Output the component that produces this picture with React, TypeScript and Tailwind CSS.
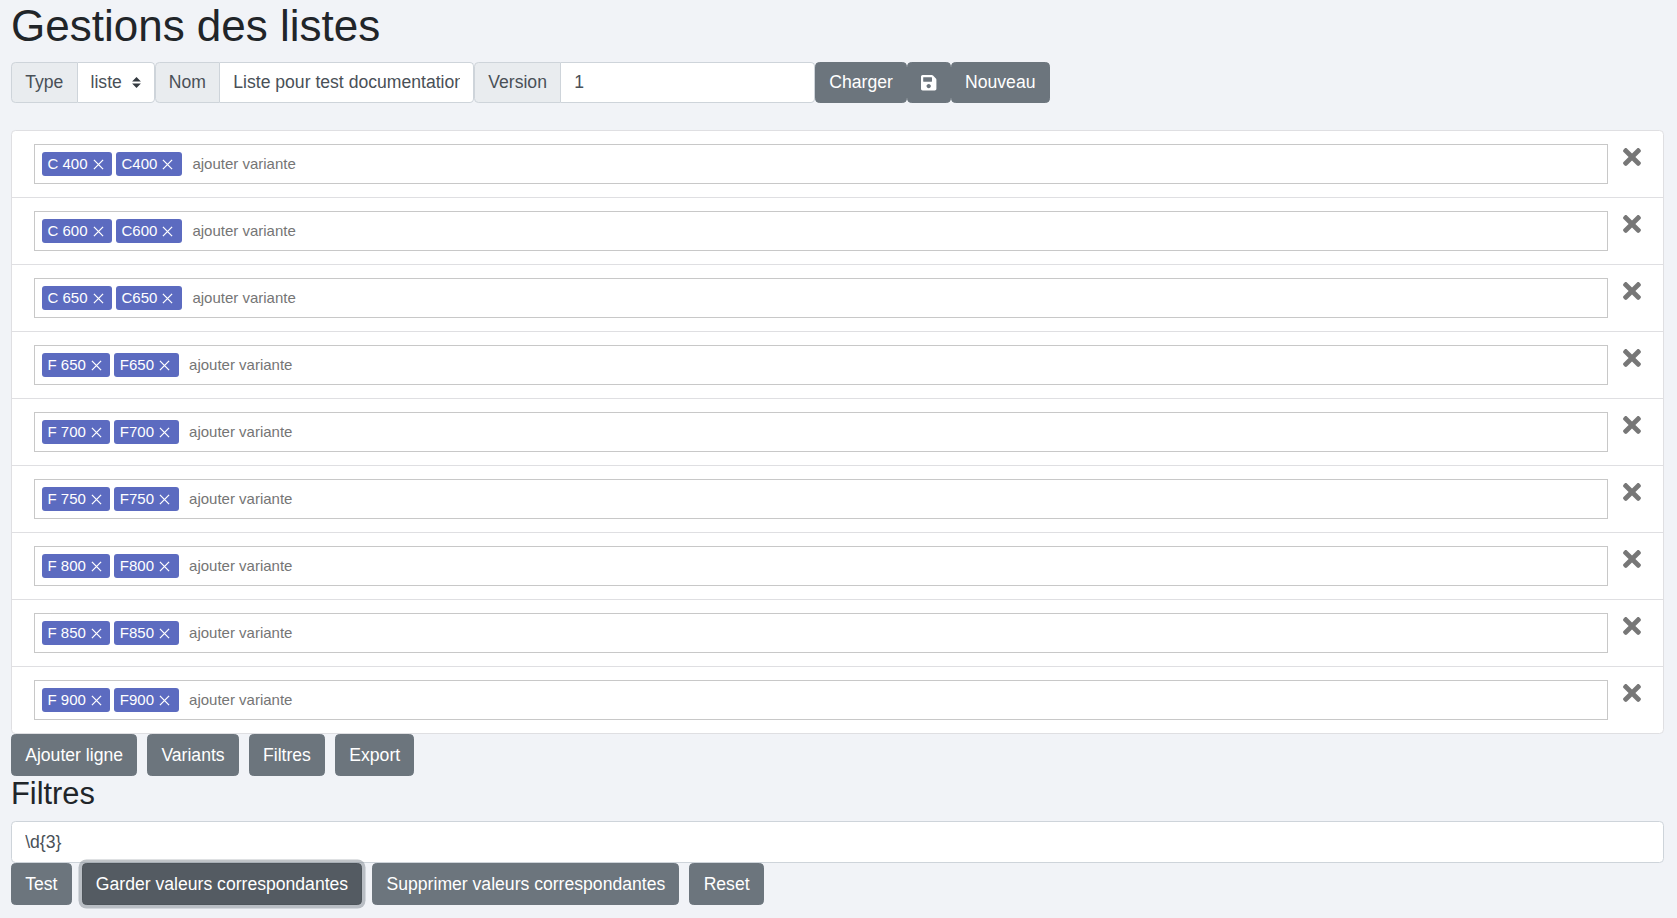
import { FaSave, FaTimes } from 'react-icons/fa'

const rows = [
  ['C 400', 'C400'],
  ['C 600', 'C600'],
  ['C 650', 'C650'],
  ['F 650', 'F650'],
  ['F 700', 'F700'],
  ['F 750', 'F750'],
  ['F 800', 'F800'],
  ['F 850', 'F850'],
  ['F 900', 'F900'],
]

const addon =
  'flex items-center bg-[#e9ecef] border border-[#ced4da] rounded-l-[4.4px] px-[13.2px] text-[17.6px] leading-[26.4px] text-[#495057]'
const field =
  'h-[41.6px] bg-white border border-l-0 border-[#ced4da] rounded-r-[4.4px] px-[13.2px] text-[17.6px] text-[#495057] outline-none'
const btn =
  'h-[41.6px] bg-[#6c757d] border border-[#6c757d] rounded-[4.4px] px-[13.2px] text-[17.6px] leading-[26.4px] text-white'

function Tag({ label }: { label: string }) {
  return (
    <span className="flex items-center h-[24px] bg-[#5c6bc0] rounded-[3px] pl-[5.5px] pr-[8.5px] gap-[5px] text-[15px] text-white">
      {label}
      <svg className="w-[11px] h-[11px]" viewBox="0 0 12 12" fill="none" stroke="currentColor" strokeWidth={1.4}>
        <path d="M1 1l10 10M11 1L1 11" />
      </svg>
    </span>
  )
}

function Row({ tags, first }: { tags: string[]; first: boolean }) {
  return (
    <div className={`flex items-start py-[13px] pl-[22px] pr-[21px] ${first ? '' : 'border-t border-[#dfdfe2]'}`}>
      <div className="flex-1 flex items-center h-[40px] border border-[#c8c8c8] pl-[7px] gap-[4px]">
        {tags.map((t) => (
          <Tag key={t} label={t} />
        ))}
        <span className="ml-[6.5px] text-[15px] text-[#757575]">ajouter variante</span>
      </div>
      <button className="ml-[13px] w-[21px] text-[#777777]">
        <FaTimes className="w-[22px] h-[26px]" />
      </button>
    </div>
  )
}

export default function App() {
  return (
    <div className="min-h-[918px] bg-[#f1f3f7] pl-[11px] pr-[13px] font-['Liberation_Sans',sans-serif]">
      <h1 className="text-[44px] leading-[52.8px] text-[#212529] mb-[8.8px]">Gestions des listes</h1>

      {/* Toolbar */}
      <div className="flex h-[41.6px]">
        <div className={addon}>Type</div>
        <div className="flex items-center w-[77px] bg-white border border-l-0 border-[#ced4da] rounded-r-[4.4px] pl-[13px] text-[17.6px] text-[#495057]">
          liste
          <svg className="ml-[10px] w-[9px] h-[11px]" viewBox="0 0 4 5" fill="#343a40">
            <path d="M2 0L0 2h4zm0 5L0 3h4z" />
          </svg>
        </div>
        <div className={addon}>Nom</div>
        <input readOnly value="Liste pour test documentation" className={`${field} w-[254px]`} />
        <div className={addon}>Version</div>
        <input readOnly value="1" className={`${field} w-[254px]`} />
        <button className={btn}>Charger</button>
        <button className={`${btn} flex items-center`}>
          <FaSave className="w-[15.4px] h-[17.6px]" />
        </button>
        <button className={btn}>Nouveau</button>
      </div>

      {/* Lines */}
      <div className="mt-[27px] bg-white border border-[#dfdfe2] rounded-[4.4px]">
        {rows.map((tags, i) => (
          <Row key={tags[0]} tags={tags} first={i === 0} />
        ))}
      </div>

      <div className="flex gap-[10px]">
        <button className={btn}>Ajouter ligne</button>
        <button className={btn}>Variants</button>
        <button className={btn}>Filtres</button>
        <button className={btn}>Export</button>
      </div>

      <h3 className="text-[30.8px] leading-[36px] text-[#212529] mb-[9.6px]">Filtres</h3>
      <input
        readOnly
        value="\d{3}"
        className="block w-full h-[41.6px] bg-white border border-[#ced4da] rounded-[4.4px] px-[13.2px] text-[17.6px] text-[#495057] outline-none"
      />

      <div className="flex gap-[10px]">
        <button className={btn}>Test</button>
        <button className="h-[41.6px] bg-[#545b62] border border-[#4e555b] rounded-[4.4px] px-[13.2px] text-[17.6px] leading-[26.4px] text-white shadow-[0_0_0_3.5px_rgba(130,138,145,0.5)]">
          Garder valeurs correspondantes
        </button>
        <button className={btn}>Supprimer valeurs correspondantes</button>
        <button className={btn}>Reset</button>
      </div>
    </div>
  )
}
